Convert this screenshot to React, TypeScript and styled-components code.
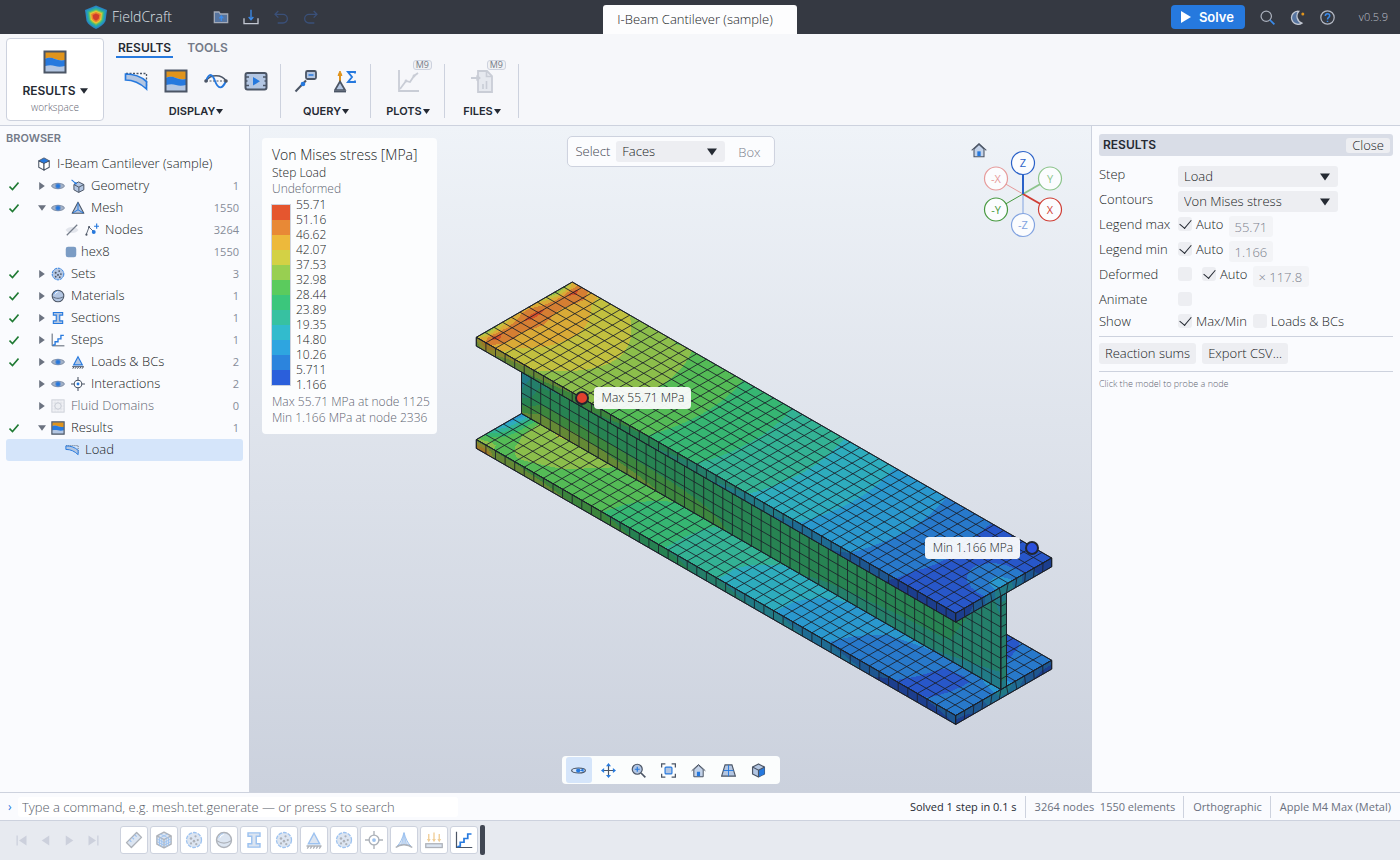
import React from "react";
import styled, { createGlobalStyle, css } from "styled-components";

const c = {
  ink: "#181c24",
  strong: "#252a33",
  muted: "#5f6572",
  faint: "#7b818d",
  line: "#cdd2de",
  panel: "#fafbfe",
  ribbon: "#f6f7fa",
  control: "#edeef2",
  accent: "#2679de",
  iconDark: "#4b5565",
  iconLight: "#b3c6e2",
  orange: "#e0941c",
};

const body = `"Open Sans", "Noto Sans", sans-serif`;
const caps = `Inter, "Liberation Sans", sans-serif`;

const Global = createGlobalStyle`
  * { box-sizing: border-box; }
  body { margin: 0; font: 300 13px/18px ${body}; color: ${c.ink}; background: ${c.panel}; }
  button, input, select { font: inherit; color: inherit; }
  button { border: 0; padding: 0; background: none; cursor: pointer; }
  svg { display: block; flex: none; }
`;

/* ---------- icons ---------- */

const D = c.iconDark;
const B = c.accent;
const L = c.iconLight;
const O = c.orange;

const icons: Record<string, React.ReactNode> = {
  contour: (
    <>
      <path d="M1.5 1.5h21v21h-21z" fill={L} />
      <path d="M2 2h20v8c-4 1-7 0-10-1s-7-2-10 0z" fill={O} />
      <path d="M2 9c4-2 7-1 10 0s6 2 10 1v6c-4 1-7 1-10 0s-6-1-10 0z" fill={B} />
      <path d="M1.5 1.5h21v21h-21z" fill="none" stroke={D} strokeWidth="2" />
    </>
  ),
  deformed: (
    <>
      <path d="M2 4.5h20.5v12" fill="none" stroke={D} strokeWidth="1.3" strokeDasharray="2 1.5" />
      <path d="M1.5 5c8 0 15 2 21 7.5V20C16 14 10 11 1.5 11z" fill={L} stroke={B} strokeWidth="1.7" />
    </>
  ),
  wave: (
    <>
      <path d="M2 12h20" stroke={D} strokeWidth="1" strokeDasharray="2 1.5" />
      <path d="M2 12c4-7 16-7 20 0" fill="none" stroke={D} strokeWidth="1.7" />
      <path d="M2 12c3-8 6-8 9 0s7 9 11 0" fill="none" stroke={B} strokeWidth="1.9" />
      <circle cx="2" cy="12" r="1.8" fill={D} />
      <circle cx="22" cy="12" r="1.8" fill={D} />
    </>
  ),
  animate: (
    <>
      <rect x="1.5" y="4" width="21" height="16.5" rx="2" fill={L} stroke={D} strokeWidth="2" />
      <path d="M2 8h3M2 12h1.5M2 16.5h3M19 8h3M20.5 12H22M19 16.5h3" stroke={D} strokeWidth="1.4" />
      <path d="M9 8l7 4.2-7 4.3z" fill={B} />
    </>
  ),
  probe: (
    <>
      <path d="M1.5 22.5L12 11.5" stroke={D} strokeWidth="2" />
      <circle cx="9" cy="15" r="2.3" fill={B} />
      <rect x="12" y="2" width="10" height="8" rx="1.5" fill={L} stroke={D} strokeWidth="1.8" />
      <path d="M14.5 6h5" stroke={B} strokeWidth="1.5" />
    </>
  ),
  sum: (
    <>
      <path d="M6 13V4" stroke={O} strokeWidth="2" />
      <path d="M4 6.5L6 2l2 4.5z" fill={O} stroke={O} />
      <path d="M6 12.5l5 8.5H1z" fill={L} stroke={D} strokeWidth="1.7" />
      <path d="M0 22.5h12" stroke={D} strokeWidth="1.8" />
      <path d="M21 4.5V3h-7l4 5-4 5h7v-1.5" fill="none" stroke={B} strokeWidth="1.9" />
    </>
  ),
  plots: (
    <>
      <path d="M3 1v21h20" fill="none" stroke="#c9cdd6" strokeWidth="1.8" />
      <path d="M4 20l6-8 4 1 4-6 4-3" fill="none" stroke="#c9cdd6" strokeWidth="1.8" />
      <circle cx="10" cy="12" r="1.4" fill="#c9cdd6" />
      <circle cx="18" cy="7" r="1.4" fill="#c9cdd6" />
    </>
  ),
  files: (
    <>
      <path d="M8 2h9l5 5v16H8z" fill="#e6e9ef" stroke="#c9cdd6" strokeWidth="1.8" />
      <path d="M16.5 2v5.5H22M13 20v-5M16.5 20v-8" fill="none" stroke="#c9cdd6" strokeWidth="1.6" />
      <path d="M1 9h8M6.5 6.5l3 2.5-3 2.5" fill="none" stroke="#c9cdd6" strokeWidth="1.8" />
    </>
  ),
  home: (
    <>
      <path d="M4.5 10.5V22h15V10.5L12 3.5z" fill="#c3d2e8" stroke={D} strokeWidth="1.6" />
      <path d="M1 12.5l11-10 11 10" fill="none" stroke={D} strokeWidth="1.6" />
      <path d="M9.5 14h5v7h-5z" fill={B} />
    </>
  ),
  root: (
    <>
      <path d="M3 6.5l9 4v12l-9-5z" fill="#fff" stroke={D} strokeWidth="1.8" strokeLinejoin="round" />
      <path d="M21 6.5l-9 4v12l9-5z" fill="#fff" stroke={D} strokeWidth="1.8" strokeLinejoin="round" />
      <path d="M12 1.5l9 5-9 4.5-9-4.5z" fill={B} stroke={D} strokeWidth="1.5" strokeLinejoin="round" />
    </>
  ),
  geometry: (
    <>
      <path d="M13 5l9 4.5v9L13 23l-8-4.5v-9z" fill={L} stroke={D} strokeWidth="1.7" strokeLinejoin="round" />
      <path d="M5 9.5l8.5 4.5L22 9.5M13.5 14v9" fill="none" stroke={D} strokeWidth="1.7" />
      <path d="M1 1.5l7 6" stroke={B} strokeWidth="1.8" />
      <circle cx="8" cy="7.5" r="2" fill={B} />
    </>
  ),
  mesh: (
    <>
      <path d="M12 2l10 19H2z" fill={L} stroke={D} strokeWidth="1.8" strokeLinejoin="round" />
      <path d="M12 3v12L3 20.5M12 15l9 5.5" fill="none" stroke={B} strokeWidth="1.7" />
    </>
  ),
  eye: (
    <>
      <path d="M1 12C5 6 19 6 23 12 19 18 5 18 1 12z" fill="#a3b2c8" stroke="#8796ad" strokeWidth="1.8" />
      <circle cx="12" cy="12" r="4.6" fill="#5c8bcc" />
      <circle cx="12" cy="12" r="3.2" fill={B} />
    </>
  ),
  eyeOff: (
    <>
      <path d="M1 12C5 5 19 5 23 12 19 19 5 19 1 12z" fill="#e2e5ec" />
      <path d="M3 21L21 3" stroke="#747c8a" strokeWidth="2" />
    </>
  ),
  nodes: (
    <>
      <path d="M2 20L7 7l8 8" fill="none" stroke={D} strokeWidth="1.5" />
      <circle cx="2.5" cy="20" r="1.8" fill={D} />
      <circle cx="7" cy="7" r="1.8" fill={D} />
      <circle cx="15" cy="15.5" r="3.3" fill={B} />
      <path d="M20 1v9M15.5 5.5h9" stroke={B} strokeWidth="2" />
    </>
  ),
  hex: <rect x="3" y="3" width="18" height="18" rx="4" fill="#7b9cc4" />,
  sets: (
    <>
      <circle cx="12" cy="12" r="10" fill={L} stroke={B} strokeWidth="1.7" strokeDasharray="5 1.5" />
      <g fill={D}>
        <circle cx="8" cy="10" r="1.7" />
        <circle cx="14" cy="7" r="1.5" />
        <circle cx="17" cy="12" r="1.5" />
        <circle cx="12" cy="13.5" r="1.7" />
        <circle cx="8" cy="16.5" r="1.5" />
        <circle cx="15" cy="17.5" r="1.5" />
      </g>
    </>
  ),
  material: (
    <>
      <circle cx="12" cy="12" r="10" fill={L} stroke={D} strokeWidth="1.8" />
      <path d="M2.5 13c6 4 13 4 19 0" fill="none" stroke={D} strokeWidth="1.4" />
      <path d="M6 9c1-2.5 3-4 5.5-4.5" fill="none" stroke="#fff" strokeWidth="2" />
      <path d="M5 9c1-3 3-5 6-5.5" fill="none" stroke={B} strokeWidth="1.2" />
    </>
  ),
  section: <path d="M4 2.5h16V7h-5v10h5v4.5H4V17h5V7H4z" fill={L} stroke={B} strokeWidth="1.9" />,
  steps: (
    <>
      <path d="M2 1v21h21" fill="none" stroke={D} strokeWidth="1.6" />
      <path d="M3 21l4-1v-5h5v-5h5V4h5" fill="none" stroke={B} strokeWidth="2.3" />
    </>
  ),
  loads: (
    <>
      <path d="M12 3l7.5 14h-15z" fill={L} stroke={B} strokeWidth="1.9" />
      <path d="M2 20h20M3 23.5l2-3M7 23.5l2-3M11 23.5l2-3M15 23.5l2-3M19 23.5l2-3" stroke={D} strokeWidth="1.7" fill="none" />
    </>
  ),
  interactions: (
    <>
      <circle cx="12" cy="12" r="6.5" fill="#fff" stroke={D} strokeWidth="1.8" />
      <path d="M12 0v6M12 18v6M0 12h6M18 12h6" stroke={D} strokeWidth="1.8" />
      <circle cx="12" cy="12" r="2.5" fill={B} />
    </>
  ),
  fluid: (
    <>
      <rect x="1.5" y="1.5" width="21" height="21" fill="#f0f1f5" stroke="#cdd1d9" strokeWidth="1.7" />
      <path d="M2 7h20M2 12h20M2 17h20M7 2v20M12 2v20M17 2v20" stroke="#d5d9e0" strokeWidth="1" strokeDasharray="2 1" />
      <circle cx="12" cy="12" r="5.5" fill="#eceef2" stroke="#c6cad3" strokeWidth="1.6" />
    </>
  ),
  orbit: (
    <>
      <ellipse cx="12" cy="12" rx="11" ry="4" fill="none" stroke={D} strokeWidth="1.9" />
      <circle cx="11.5" cy="12" r="3.4" fill={B} />
      <path d="M14 12l6-3.5.5 6z" fill={B} />
    </>
  ),
  pan: (
    <>
      <path d="M12 4v16M4 12h16" stroke={D} strokeWidth="1.9" />
      <path d="M12 0l4 5H8zM12 24l4-5H8zM0 12l5-4v8zM24 12l-5-4v8z" fill={B} />
    </>
  ),
  zoomIn: (
    <>
      <circle cx="10" cy="10" r="8" fill={L} stroke={D} strokeWidth="1.9" />
      <path d="M16 16l7 7" stroke={D} strokeWidth="2.6" />
      <path d="M10 6v8M6 10h8" stroke={B} strokeWidth="1.9" />
    </>
  ),
  fit: (
    <>
      <path d="M1 7V1.5h6M17 1.5h6V7M23 17v5.5h-6M7 22.5H1V17" fill="none" stroke={D} strokeWidth="2" />
      <rect x="6.5" y="6.5" width="11" height="11" rx="1.5" fill={L} stroke={B} strokeWidth="1.9" />
    </>
  ),
  persp: (
    <>
      <path d="M6.5 3h11L23 21H1z" fill={L} stroke={D} strokeWidth="1.8" />
      <path d="M12 3v18M4 12h16" stroke={B} strokeWidth="1.5" />
    </>
  ),
  cube: (
    <>
      <path d="M12 1.5l9.5 5v11l-9.5 5-9.5-5v-11z" fill={L} stroke={D} strokeWidth="1.9" strokeLinejoin="round" />
      <path d="M12 11.5l9.5-5v11l-9.5 5z" fill={B} />
      <path d="M2.5 6.5l9.5 5 9.5-5M12 11.5v11" fill="none" stroke={D} strokeWidth="1.8" />
    </>
  ),
  sketch: (
    <>
      <path d="M2 15.5L15.5 2 22 8.5 8.5 22z" fill={L} stroke={D} strokeWidth="1.8" strokeLinejoin="round" />
      <path d="M6 12l2.5 2.5M9.5 8.5L12 11M13 5l2.5 2.5" stroke={B} strokeWidth="1.5" />
    </>
  ),
  meshCube: (
    <>
      <path d="M12 1.5l9.5 5v11l-9.5 5-9.5-5v-11z" fill={L} stroke={D} strokeWidth="1.8" strokeLinejoin="round" />
      <path d="M2.5 6.5l9.5 5 9.5-5M12 11.5v11" fill="none" stroke={D} strokeWidth="1.6" />
      <path
        d="M6 8.5v11M9 10v11M15 10v11M18 8.5v11M2.5 10.5l9.5 5 9.5-5M2.5 14l9.5 5 9.5-5M7 4l10 5M17 4L7 9"
        fill="none"
        stroke={B}
        strokeWidth="1.2"
      />
    </>
  ),
  constraint: (
    <>
      <path d="M12 2C10 10 7 16 3 20c6-3 12-3 18 0-4-4-7-10-9-18z" fill={L} stroke={B} strokeWidth="1.3" />
      <path d="M12 3L9 18M12 3v15M12 3l3 15" stroke={B} strokeWidth="1" />
      <path d="M1 22c6-5 16-5 22 0" fill="none" stroke={D} strokeWidth="1.9" />
    </>
  ),
  pressure: (
    <>
      <rect x="1" y="17" width="22" height="5" fill={L} stroke={D} strokeWidth="1.7" />
      <path d="M5 4v9M12 2v11M19 4v9" stroke={O} strokeWidth="1.8" />
      <path d="M2.5 10.5h5L5 15zM9.5 10.5h5L12 15zM16.5 10.5h5L19 15z" fill={O} />
    </>
  ),
  open: (
    <>
      <path d="M2 4.5h7l2 3h11v13H2z" fill="#56749f" stroke="#a4abb8" strokeWidth="1.9" />
      <path d="M12.5 18v-6M9.5 14l3-3.5 3 3.5" fill="none" stroke="#3b8bea" strokeWidth="2" />
    </>
  ),
  save: (
    <>
      <path d="M1.5 14v8h21v-8" fill="none" stroke="#c3c8d2" strokeWidth="2" />
      <path d="M12 1v14M8.5 12l3.5 4 3.5-4" fill="none" stroke="#3b8bea" strokeWidth="2" />
    </>
  ),
  undo: <path d="M8 3L3 8l5 5M3 8h12a6 6 0 010 13H7" fill="none" stroke="#3a5079" strokeWidth="1.9" />,
  redo: <path d="M16 3l5 5-5 5M21 8H9a6 6 0 000 13h8" fill="none" stroke="#3a5079" strokeWidth="1.9" />,
  search: (
    <>
      <circle cx="10" cy="10" r="8.3" fill="none" stroke="#a9afbb" strokeWidth="2" />
      <path d="M16 16l7 7" stroke="#3b8bea" strokeWidth="2.8" />
    </>
  ),
  moon: (
    <>
      <path d="M14 2a10.5 10.5 0 105 19A12 12 0 0114 2z" fill="#56749f" stroke="#c3c8d2" strokeWidth="2" />
      <circle cx="20.5" cy="6.5" r="2.4" fill={O} />
    </>
  ),
  help: (
    <>
      <circle cx="12" cy="12" r="10.7" fill="none" stroke="#b5bac5" strokeWidth="1.9" />
      <path d="M8.5 9.5c0-5 7-4.5 7-.5 0 3-3.5 2.5-3.5 6M12 17v2.2" fill="none" stroke="#3b8bea" strokeWidth="2.4" />
    </>
  ),
  first: <path d="M4 4v16h2V4zM20 4v16L8 12z" fill="#ccd0dc" />,
  prev: <path d="M18 4v16L6 12z" fill="#ccd0dc" />,
  next: <path d="M6 4v16l12-8z" fill="#ccd0dc" />,
  last: <path d="M4 4v16l12-8zM18 4v16h2V4z" fill="#ccd0dc" />,
};

const Icon = ({ name, size = 14 }: { name: string; size?: number }) => (
  <svg width={size} height={size} viewBox="0 0 24 24" aria-hidden="true">
    {icons[name]}
  </svg>
);

const Caret = ({ size = 8, color = c.strong }: { size?: number; color?: string }) => (
  <svg width={size} height={size} viewBox="0 0 10 10" aria-hidden="true">
    <path d="M0 1.5h10l-5 7z" fill={color} />
  </svg>
);

/* ---------- stress model ---------- */

const LEGEND = [
  "#2b5fdb", "#2c84dd", "#2ea5e0", "#32bbcd", "#37c1a1", "#3bc67c",
  "#5bcb5d", "#98cf51", "#d3d145", "#edb93b", "#e88936", "#e5562f",
];

type P = [number, number];
type Field = (u: number, v: number) => number;

const NU = 50;
const NV = 11;
const NW = 9;
const THICK = 8.8;
const HEIGHT = 111.1;

// Isometric projection of (element along length, pixels across width, pixels down).
const project = (u: number, y: number, z: number): P => [
  476.3 + 9.588 * u + y,
  337.3 + 5.52 * u - 0.5764 * y + z,
];

const innerY = (v: number) => (v <= 5 ? v * 9.04 : v >= 6 ? 96 - (11 - v) * 9.04 : 45.2 + (v - 5) * 5.6);
const outerY = (v: number) => (v * 96) / NV;

// Bilinear lookup; rows[v][u].
const table = (us: number[], vs: number[], rows: number[][]): Field => (u, v) => {
  const find = (a: number[], t: number) => {
    let i = 0;
    while (i < a.length - 2 && t > a[i + 1]) i++;
    return [i, Math.max(0, Math.min(1, (t - a[i]) / (a[i + 1] - a[i])))];
  };
  const [i, s] = find(us, u);
  const [j, t] = find(vs, v);
  const row = (k: number) => rows[k][i] * (1 - s) + rows[k][i + 1] * s;
  return row(j) * (1 - t) + row(j + 1) * t;
};

const spineLevels = [10, 9, 8, 7, 6, 5, 4, 3, 2, 1, 0.4];
const spine = table([2, 5, 9.3, 14, 18.7, 23.8, 29.3, 34.5, 40, 44.4, 50], [0, 1], [spineLevels, spineLevels]);
const root0 = [8.5, 7.3, 7.5, 8.2, 8.8, 9.7, 9.7, 8.8, 8, 7, 7.3, 9];
const root1 = [10.3, 11.6, 10.9, 10.7, 10.9, 11.3, 11.3, 10.9, 10.6, 10.8, 11.4, 10.8];
const root2 = [9.3, 10, 10.1, 9.9, 10.1, 10.2, 10.1, 9.9, 9.9, 10.1, 10.3, 9.6];

const topField: Field = (u, v) => {
  const k = Math.round(Math.max(0, Math.min(11, v)));
  if (u < 0.5) return root0[k];
  if (u < 1.5) return root1[k];
  if (u < 2.5) return root2[k];
  const bend = u < 12 ? 0.11 : u < 17 ? 0.05 : 0.03;
  const tip = 2.1 * Math.exp(-(((50 - u) / 2.2) ** 2) - ((v - 5.6) / 2) ** 2);
  return spine(u + bend * (v - 5.5) ** 2, 0) + tip;
};

const bu = [0, 1, 2, 4, 7, 10, 13.2, 16, 19.7, 25.2, 30, 34, 37, 40, 43.3, 45, 47, 50];
const b0 = [7.3, 7.6, 6.9, 6.9, 6.7, 6.4, 6, 5.5, 5, 4, 3.2, 2.5, 1.95, 1.5, 1, 0.9, 1.02, 1.3];
const b2 = [3, 5.2, 6.9, 7.4, 7.1, 6.7, 6.1, 5.6, 5, 4, 3.2, 2.6, 2.1, 1.7, 1.2, 0.95, 0.9, 1.35];
const b4 = [2.3, 5, 7.2, 7.4, 7.2, 6.9, 6.3, 5.8, 5.05, 4.2, 3.4, 2.75, 2.3, 1.9, 1.3, 1.02, 0.85, 1.5];
const b5 = [2, 5, 7.3, 8.2, 7.6, 6.9, 6.5, 6, 5.1, 4.35, 3.6, 3.05, 2.8, 2.4, 2.02, 1.8, 1.5, 3];
const bottomField = table(bu, [0, 2.5, 4, 5, 6, 7, 8.5, 11], [b0, b2, b4, b5, b5, b4, b2, b0]);

const webField = table(
  [0, 2, 6, 12, 20, 28, 36, 44, 50],
  [0, 4, 7, 9],
  [
    [6, 6, 6, 6, 6, 5.8, 5.8, 6.4, 3.6],
    [2.6, 4.2, 4.6, 4.8, 5.1, 5.3, 5.4, 5.4, 4.4],
    [4.2, 5.9, 6.1, 5.9, 5.8, 5.5, 5.4, 5.1, 4.2],
    [7.2, 8.1, 8.1, 7.4, 6.2, 5.1, 4.4, 3.8, 3],
  ]
);

const topSide: Field = (u, w) => Math.max(0.3, topField(u, 0) * (1 - 0.17 * w));
const bottomSide: Field = (u, w) => bottomField(u, 0) + (u < 2 ? 2.9 : 0.6) * w - (u > 40 ? 0.9 * w : 0);
const topEnd: Field = (v, w) => 0.6 + 2.9 * Math.exp(-(((v - 5.5) / 2.4) ** 2)) + 0.2 * w;
const bottomEnd: Field = (v, w) => 1.25 + 2.3 * Math.exp(-(((v - 5.5) / 2.4) ** 2)) - 0.6 * w;
const webEnd = table([0, 1], [0, 1, 8, 9], [[3.4, 3.4], [4.3, 4.3], [4.3, 4.3], [3.2, 3.2]]);

const shade = (hex: string, k: number) =>
  `rgb(${[1, 3, 5].map((i) => Math.round(parseInt(hex.slice(i, i + 2), 16) * k)).join(",")})`;

type Vert = { p: P; f: number };

// Keeps the part of a polygon where the field is above (or below) a level.
const clip = (poly: Vert[], level: number, above: boolean): Vert[] => {
  const out: Vert[] = [];
  const inside = (f: number) => (above ? f >= level : f <= level);
  poly.forEach((a, i) => {
    const b = poly[(i + 1) % poly.length];
    if (inside(a.f)) out.push(a);
    if (inside(a.f) !== inside(b.f)) {
      const t = (level - a.f) / (b.f - a.f);
      out.push({ p: [a.p[0] + t * (b.p[0] - a.p[0]), a.p[1] + t * (b.p[1] - a.p[1])], f: level });
    }
  });
  return out;
};

const toPath = (pts: P[], close = true) =>
  "M" + pts.map((p) => p[0].toFixed(1) + " " + p[1].toFixed(1)).join("L") + (close ? "Z" : "");

interface SurfaceProps {
  nu: number;
  nv: number;
  at: (i: number, j: number) => P;
  field: Field;
  light: number;
}

const Surface = ({ nu, nv, at, field, light }: SurfaceProps) => {
  const bands: string[] = LEGEND.map(() => "");
  for (let i = 0; i < nu; i++) {
    for (let j = 0; j < nv; j++) {
      const q = [[i, j], [i + 1, j], [i + 1, j + 1], [i, j + 1]].map(([a, b]) => ({
        p: at(a, b),
        f: Math.max(0.01, Math.min(11.99, field(a, b))),
      }));
      // Fan each quad around its centre so the bands stay smooth.
      const mid: Vert = {
        p: [q.reduce((s, k) => s + k.p[0], 0) / 4, q.reduce((s, k) => s + k.p[1], 0) / 4],
        f: q.reduce((s, k) => s + k.f, 0) / 4,
      };
      q.forEach((a, k) => {
        const tri = [a, q[(k + 1) % 4], mid];
        const fs = tri.map((t) => t.f);
        const hi = Math.floor(Math.max(...fs));
        for (let b = Math.floor(Math.min(...fs)); b <= hi; b++) {
          const part = clip(clip(tri, b, true), b + 1, false);
          if (part.length > 2) bands[b] += toPath(part.map((t) => t.p));
        }
      });
    }
  }
  const range = (n: number) => Array.from({ length: n + 1 }, (_, k) => k);
  const grid =
    range(nu).map((i) => toPath([at(i, 0), at(i, nv)], false)).join("") +
    range(nv).map((j) => toPath([at(0, j), at(nu, j)], false)).join("");
  return (
    <g>
      {bands.map((d, b) => d && <path key={b} d={d} fill={shade(LEGEND[b], light)} shapeRendering="crispEdges" />)}
      <path d={grid} fill="none" stroke="#1b2029" strokeWidth="1" strokeOpacity=".85" />
      <path
        d={toPath([at(0, 0), at(nu, 0), at(nu, nv), at(0, nv)])}
        fill="none"
        stroke="#1b2029"
        strokeLinejoin="round"
      />
    </g>
  );
};

const LOW = HEIGHT - THICK;

const Beam = () => (
  <g>
    <Surface nu={NU} nv={NV} field={bottomField} light={0.92} at={(i, j) => project(i, innerY(j), LOW)} />
    <Surface nu={NU} nv={1} field={bottomSide} light={0.65} at={(i, j) => project(i, 0, LOW + j * THICK)} />
    <Surface nu={NV} nv={1} field={bottomEnd} light={0.65}
      at={(i, j) => project(NU, j ? outerY(i) : innerY(i), LOW + j * THICK)} />
    <Surface nu={NU} nv={NW} field={webField} light={0.66}
      at={(i, j) => project(i, innerY(5), THICK + (j * (LOW - THICK)) / NW)} />
    <Surface nu={1} nv={NW} field={webEnd} light={0.65}
      at={(i, j) => project(NU, innerY(5 + i), THICK + (j * (LOW - THICK)) / NW)} />
    <Surface nu={NU} nv={NV} field={topField} light={0.92} at={(i, j) => project(i, outerY(j), 0)} />
    <Surface nu={NU} nv={1} field={topSide} light={0.65} at={(i, j) => project(i, 0, j * THICK)} />
    <Surface nu={NV} nv={1} field={topEnd} light={0.65}
      at={(i, j) => project(NU, j ? innerY(i) : outerY(i), j * THICK)} />
  </g>
);

const CanvasSvg = styled.svg`
  position: absolute;
  inset: 0;
  width: 100%;
  height: 100%;
  font: 300 12px ${body};
`;

const Model = () => (
  <CanvasSvg viewBox="250 126 841 666" role="img" aria-label="I-beam stress contours">
    <Beam />
    <circle cx="582" cy="398" r="6" fill="#e2402e" stroke="#22262f" strokeWidth="2" />
    <circle cx="1032" cy="548" r="6" fill="#2b50dc" stroke="#22262f" strokeWidth="2" />
    <rect x="594" y="387" width="97" height="22" rx="4" fill="#fbfcfd" fillOpacity=".95" />
    <rect x="925" y="537" width="95" height="22" rx="4" fill="#fbfcfd" fillOpacity=".95" />
    <g fill={c.ink} textAnchor="middle">
      <text x="643" y="402">Max 55.71 MPa</text>
      <text x="973" y="552">Min 1.166 MPa</text>
    </g>
  </CanvasSvg>
);

/* ---------- shell ---------- */

const Page = styled.div`
  display: flex;
  flex-direction: column;
  min-height: 100vh;
`;

const TitleBar = styled.header`
  display: grid;
  grid-template-columns: 1fr auto 1fr;
  align-items: center;
  height: 34px;
  background: #353942;
  color: #dfe2e8;
`;

const TitleGroup = styled.div<{ $end?: boolean }>`
  display: flex;
  align-items: center;
  justify-content: ${(p) => (p.$end ? "flex-end" : "flex-start")};
  padding: ${(p) => (p.$end ? "0 12px 0 0" : "0 0 0 84px")};
`;

const Brand = styled.span`
  margin: 0 34px 0 4px;
  font-size: 14px;
`;

const TitleButton = styled.button`
  display: grid;
  place-items: center;
  width: 30px;
  height: 30px;
`;

const DocTab = styled.div`
  align-self: end;
  height: 29px;
  padding: 5px 24px 0 14px;
  border-radius: 3px 3px 0 0;
  background: #fdfdfe;
  color: ${c.ink};
`;

const Solve = styled.button`
  display: flex;
  align-items: center;
  gap: 8px;
  height: 24px;
  margin-right: 8px;
  padding: 0 11px 0 10px;
  border-radius: 4px;
  background: ${c.accent};
  color: #fff;
  font: 600 13px/20px ${caps};
`;

const Version = styled.span`
  margin-left: 16px;
  font-size: 11px;
  color: #b9bdc7;
`;

const Ribbon = styled.section`
  display: flex;
  height: 92px;
  padding: 4px 6px;
  gap: 12px;
  background: ${c.ribbon};
  border-bottom: 1px solid ${c.line};
`;

const Workspace = styled.button`
  display: flex;
  flex-direction: column;
  align-items: center;
  width: 98px;
  height: 83px;
  padding-top: 11px;
  border: 1px solid ${c.line};
  border-radius: 4px;
  background: #fff;
`;

const CapsLabel = styled.span<{ $size?: number }>`
  display: inline-flex;
  align-items: center;
  gap: 1px;
  font: 600 ${(p) => p.$size ?? 11}px/14px ${caps};
  color: ${c.strong};
`;

const WorkspaceName = styled(CapsLabel)`
  gap: 4px;
  margin: 10px 0 3px;
`;

const Small = styled.small<{ $size?: number }>`
  display: block;
  font-size: ${(p) => p.$size ?? 10}px;
  line-height: 12px;
  color: ${c.muted};
`;

const RibbonMain = styled.div`
  display: flex;
  flex-direction: column;
`;

const RibbonTabs = styled.nav`
  display: flex;
  gap: 12px;
  height: 26px;
`;

const RibbonTab = styled.button<{ $active?: boolean }>`
  height: 20px;
  padding: 2px 2px 0;
  border-bottom: 2px solid ${(p) => (p.$active ? c.accent : "transparent")};
  color: ${(p) => (p.$active ? c.strong : "#747a88")};
  font: 600 12px/16px ${caps};
`;

const Groups = styled.div`
  display: flex;
  height: 54px;
`;

const Group = styled.div`
  display: flex;
  flex-direction: column;
  align-items: center;
  justify-content: space-between;
  min-width: 74px;
  padding: 0 4px 0 5px;
  border-right: 1px solid ${c.line};
  &:first-child { padding-left: 0; }
`;

const Tools = styled.div`
  display: flex;
`;

const Tool = styled.button`
  position: relative;
  display: grid;
  place-items: center;
  width: 40px;
  height: 34px;
`;

const Badge = styled.span`
  position: absolute;
  top: -4px;
  right: -4px;
  padding: 0 2px;
  border: 1px solid ${c.line};
  border-radius: 3px;
  background: #f0f1f4;
  color: #757b88;
  font: 400 9px/8px ${body};
`;

const GroupLabel = styled.button`
  display: flex;
`;

const Main = styled.main`
  display: flex;
  flex: 1;
`;

const Browser = styled.aside`
  flex: none;
  width: 250px;
  padding: 4px 6px;
  border-right: 1px solid ${c.line};
`;

const PanelTitle = styled.h2`
  margin: 0 0 7px;
  font: 600 11px/16px ${caps};
  color: #747a88;
`;

const Tree = styled.ul`
  margin: 0;
  padding: 0;
  list-style: none;
`;

const TreeRow = styled.li<{ $selected?: boolean; $dim?: boolean }>`
  display: flex;
  align-items: center;
  height: 22px;
  padding-right: 4px;
  border-radius: 3px;
  background: ${(p) => (p.$selected ? "#d5e5fa" : "transparent")};
  color: ${(p) => (p.$dim ? c.muted : c.ink)};
`;

const Status = styled.span`
  display: grid;
  place-items: center;
  width: 16px;
`;

const TreeItem = styled.span<{ $deep?: boolean }>`
  display: flex;
  align-items: center;
  flex: 1;
  gap: 4px;
  padding-left: ${(p) => (p.$deep ? 42 : 14)}px;
`;

const TreeLabel = styled.span`
  padding: 0 0 2px 1px;
`;

const Twisty = styled.span<{ $open?: boolean }>`
  display: grid;
  place-items: center;
  width: 12px;
  height: 12px;
  margin-right: -2px;
  transform: rotate(${(p) => (p.$open ? 0 : -90)}deg);
`;

const IconSlot = styled.span<{ $narrow?: boolean }>`
  display: grid;
  place-items: center;
  width: ${(p) => (p.$narrow ? 12 : 16)}px;
`;

const Count = styled.span`
  font-size: 11px;
  font-weight: 400;
  color: #868c99;
`;

const Viewport = styled.section`
  position: relative;
  flex: 1;
  min-width: 0;
  min-height: 666px;
  background: linear-gradient(#eff3f8, #cbd1dd);
`;

const LegendCard = styled.div`
  position: absolute;
  top: 12px;
  left: 12px;
  padding: 7px 7px 8px 10px;
  border-radius: 4px;
  background: #fcfdfe;
  font-size: 12px;
`;

const LegendTitle = styled.div`
  font-size: 14px;
  line-height: 20px;
`;

const LegendLine = styled.div<{ $muted?: boolean }>`
  line-height: 16px;
  color: ${(p) => (p.$muted ? c.muted : c.ink)};
`;

const Scale = styled.div`
  display: flex;
  align-items: center;
  gap: 6px;
  margin-bottom: 2px;
`;

const Swatches = styled.div`
  width: 18px;
  outline: 1px solid ${c.line};
`;

const Swatch = styled.div<{ $color: string }>`
  height: 15px;
  background: ${(p) => p.$color};
`;

const Tick = styled.div`
  line-height: 15px;
`;

const SelectBar = styled.div`
  position: absolute;
  top: 10px;
  left: 50%;
  transform: translateX(-50%);
  display: flex;
  align-items: center;
  height: 31px;
  padding: 0 13px 0 8px;
  border: 1px solid ${c.line};
  border-radius: 5px;
  background: #fbfcfe;
  color: #3f4551;
`;

const SelectWrap = styled.span<{ $width: number }>`
  display: grid;
  align-items: center;
  width: ${(p) => p.$width}px;
  > * { grid-area: 1 / 1; }
  > svg { justify-self: end; margin-right: 8px; pointer-events: none; }
`;

const Select = styled.select`
  appearance: none;
  width: 100%;
  height: 21px;
  padding: 0 6px;
  border: 0;
  border-radius: 3px;
  background: ${c.control};
  color: ${c.ink};
  line-height: 21px;
`;

const Dropdown = ({ id, value, width }: { id: string; value: string; width: number }) => (
  <SelectWrap $width={width}>
    <Select id={id} defaultValue={value}>
      <option>{value}</option>
    </Select>
    <Caret size={10} />
  </SelectWrap>
);

const SelectLabel = styled.label`
  margin-right: 6px;
  padding-bottom: 2px;
`;

const BoxButton = styled.button`
  margin-left: 13px;
  color: ${c.faint};
`;

const ViewCube = styled.svg`
  position: absolute;
  top: 20px;
  right: 24px;
  font: 400 11px ${body};
`;

const HomeButton = styled.button`
  position: absolute;
  top: 16px;
  right: 104px;
`;

const ViewBar = styled.div`
  position: absolute;
  bottom: 8px;
  left: 50%;
  transform: translateX(-50%);
  display: flex;
  gap: 4px;
  padding: 1px 8px 1px 4px;
  border-radius: 4px;
  background: #fbfdfd;
`;

const ViewButton = styled.button<{ $active?: boolean }>`
  display: grid;
  place-items: center;
  width: 26px;
  height: 26px;
  border-radius: 3px;
  background: ${(p) => (p.$active ? "#d5e5fa" : "transparent")};
`;

const Props = styled.aside`
  flex: none;
  width: 309px;
  padding: 8px 7px;
  border-left: 1px solid ${c.line};
`;

const PropsHead = styled.div`
  display: flex;
  align-items: center;
  justify-content: space-between;
  height: 22px;
  margin-bottom: 10px;
  padding: 0 3px 0 4px;
  border-radius: 3px;
  background: #d9dde7;
`;

const Button = styled.button<{ $compact?: boolean }>`
  height: ${(p) => (p.$compact ? 15 : 21)}px;
  padding: 0 6px;
  border-radius: 3px;
  background: ${c.control};
  line-height: ${(p) => (p.$compact ? 15 : 21)}px;
`;

const Form = styled.form`
  display: grid;
  gap: 4px;
  line-height: 16px;
`;

const FormRow = styled.div`
  display: grid;
  grid-template-columns: 75px 1fr;
  gap: 4px;
  min-height: 18px;
`;

const Controls = styled.div`
  display: flex;
  align-items: flex-start;
  gap: 6px;
`;

const Check = styled.input`
  appearance: none;
  display: grid;
  justify-content: center;
  width: 14px;
  height: 14px;
  margin: 1px 4px 0 0;
  border-radius: 3px;
  background: ${c.control};
  &:checked::before {
    content: "";
    width: 6px;
    height: 10px;
    border: solid ${c.strong};
    border-width: 0 1px 1px 0;
    transform: rotate(40deg);
  }
`;

const CheckLabel = styled.label`
  display: flex;
`;

const Value = styled.input<{ $wide?: boolean }>`
  width: ${(p) => (p.$wide ? 56 : 44)}px;
  height: 21px;
  padding: 0 5px;
  border: 0;
  border-radius: 3px;
  background: #f3f4f7;
  color: ${c.faint};
`;

const Rule = styled.hr`
  margin: 5px 0 6px;
  border: 0;
  border-top: 1px solid ${c.line};
`;

const ButtonRow = styled.div`
  display: flex;
  gap: 6px;
  padding-bottom: 2px;
`;

const StatusBar = styled.footer`
  display: flex;
  align-items: center;
  height: 28px;
  padding: 0 8px;
  border-top: 1px solid ${c.line};
  background: ${c.panel};
`;

const Prompt = styled.label`
  width: 10px;
  color: ${c.accent};
  font-size: 12px;
  font-weight: 400;
`;

const Command = styled.input`
  width: 440px;
  height: 20px;
  padding: 0 4px;
  border: 0;
  border-radius: 3px;
  background: #fff;
  &::placeholder { color: #565c67; }
`;

const Spacer = styled.span`
  flex: 1;
`;

const StatusText = styled.span<{ $strong?: boolean }>`
  padding: 0 8px 0 9px;
  border-left: ${(p) => (p.$strong ? "0" : `1px solid ${c.line}`)};
  color: ${(p) => (p.$strong ? c.strong : "#6b7180")};
  font-size: 11px;
  font-weight: 400;
  line-height: 22px;
  white-space: pre;
  &:last-child { padding-right: 1px; }
`;

const Timeline = styled.nav`
  display: flex;
  align-items: center;
  gap: 2px;
  height: 40px;
  padding: 0 9px 1px;
  border-top: 1px solid ${c.line};
  background: #e7eaf0;
`;

const Transport = styled.div`
  display: flex;
  width: 109px;
`;

const TransportButton = styled.button`
  display: grid;
  place-items: center;
  width: 24px;
  height: 24px;
`;

const Step = styled.button<{ $current?: boolean }>`
  display: grid;
  place-items: center;
  width: 28px;
  height: 28px;
  border: 1px solid ${c.line};
  border-radius: 3px;
  background: #fff;
  ${(p) =>
    !p.$current &&
    css`
      svg { opacity: 0.45; }
    `}
`;

const Playhead = styled.span`
  width: 5px;
  height: 30px;
  border-radius: 2px;
  background: #414753;
`;

/* ---------- data ---------- */

interface Node {
  label: string;
  icon: string;
  count?: number;
  done?: boolean;
  open?: boolean;
  leaf?: boolean;
  eye?: "eye" | "eyeOff";
  deep?: boolean;
  dim?: boolean;
  selected?: boolean;
}

const tree: Node[] = [
  { label: "I-Beam Cantilever (sample)", icon: "root", leaf: true },
  { label: "Geometry", icon: "geometry", count: 1, done: true, eye: "eye" },
  { label: "Mesh", icon: "mesh", count: 1550, done: true, eye: "eye", open: true },
  { label: "Nodes", icon: "nodes", count: 3264, eye: "eyeOff", deep: true, leaf: true },
  { label: "hex8", icon: "hex", count: 1550, deep: true, leaf: true },
  { label: "Sets", icon: "sets", count: 3, done: true },
  { label: "Materials", icon: "material", count: 1, done: true },
  { label: "Sections", icon: "section", count: 1, done: true },
  { label: "Steps", icon: "steps", count: 1, done: true },
  { label: "Loads & BCs", icon: "loads", count: 2, done: true, eye: "eye" },
  { label: "Interactions", icon: "interactions", count: 2, eye: "eye" },
  { label: "Fluid Domains", icon: "fluid", count: 0, dim: true },
  { label: "Results", icon: "contour", count: 1, done: true, open: true },
  { label: "Load", icon: "deformed", deep: true, leaf: true, selected: true },
];

const groups = [
  { label: "DISPLAY", tools: ["deformed", "contour", "wave", "animate"] },
  { label: "QUERY", tools: ["probe", "sum"] },
  { label: "PLOTS", tools: ["plots"], badge: "M9" },
  { label: "FILES", tools: ["files"], badge: "M9" },
];

const ticks = ["55.71", "51.16", "46.62", "42.07", "37.53", "32.98", "28.44", "23.89", "19.35", "14.80", "10.26", "5.711", "1.166"];

const history = ["sketch", "meshCube", "sets", "material", "section", "sets", "loads", "sets", "interactions", "constraint", "pressure", "steps"];

const axes = [
  { t: "Y", x: 27, y: -15.5, color: "#8cc48b", w: 2 },
  { t: "-X", x: -27, y: -15.5, color: "#e69a9a", w: 1 },
  { t: "-Z", x: 0, y: 31, color: "#82a3e0", w: 1 },
  { t: "-Y", x: -27, y: 15.5, color: "#47993f", w: 1 },
  { t: "X", x: 27, y: 15.5, color: "#cf3d34", w: 2 },
  { t: "Z", x: 0, y: -31, color: "#2a61c8", w: 2 },
];

const shieldRings = [
  { k: 1, fill: "#2a86c4" },
  { k: 0.88, fill: "#23a3b5" },
  { k: 0.76, fill: "#3db58a" },
  { k: 0.64, fill: "#8cc84e" },
  { k: 0.54, fill: "#e9c338" },
  { k: 0.44, fill: "#e8832d" },
  { k: 0.3, fill: "#d13c2a" },
];

const Logo = () => (
  <svg width="24" height="24" viewBox="0 0 24 24" aria-hidden="true">
    {shieldRings.map((r) => (
      <path
        key={r.k}
        d="M0 -11.5L11 -7L9.5 4C8 7.5 4 10 0 12C-4 10 -8 7.5 -9.5 4L-11 -7Z"
        transform={`translate(12 12) scale(${r.k})`}
        fill={r.fill}
      />
    ))}
  </svg>
);

const CheckMark = () => (
  <svg width="10" height="10" viewBox="0 0 10 10" aria-label="complete">
    <path d="M.5 5.5l3 3 6-7" fill="none" stroke="#1f7a33" strokeWidth="1.6" />
  </svg>
);

const Auto = ({ on = true, text = "Auto" }: { on?: boolean; text?: string }) => (
  <CheckLabel>
    <Check type="checkbox" defaultChecked={on} />
    {text}
  </CheckLabel>
);

export default function App() {
  return (
    <Page>
      <Global />
      <TitleBar>
        <TitleGroup>
          <Logo />
          <Brand>FieldCraft</Brand>
          {["open", "save", "undo", "redo"].map((n) => (
            <TitleButton key={n} aria-label={n}>
              <Icon name={n} size={16} />
            </TitleButton>
          ))}
        </TitleGroup>
        <DocTab>I-Beam Cantilever (sample)</DocTab>
        <TitleGroup $end>
          <Solve>
            <svg width="10" height="12" viewBox="0 0 10 12" aria-hidden="true">
              <path d="M0 0v12l10-6z" fill="#fff" />
            </svg>
            Solve
          </Solve>
          {["search", "moon", "help"].map((n) => (
            <TitleButton key={n} aria-label={n}>
              <Icon name={n} size={15} />
            </TitleButton>
          ))}
          <Version>v0.5.9</Version>
        </TitleGroup>
      </TitleBar>

      <Ribbon>
        <Workspace>
          <Icon name="contour" size={24} />
          <WorkspaceName $size={12}>
            RESULTS <Caret />
          </WorkspaceName>
          <Small>workspace</Small>
        </Workspace>
        <RibbonMain>
          <RibbonTabs>
            <RibbonTab $active>RESULTS</RibbonTab>
            <RibbonTab>TOOLS</RibbonTab>
          </RibbonTabs>
          <Groups>
            {groups.map((g) => (
              <Group key={g.label}>
                <Tools>
                  {g.tools.map((t) => (
                    <Tool key={t} aria-label={t}>
                      <Icon name={t} size={24} />
                      {g.badge && <Badge>{g.badge}</Badge>}
                    </Tool>
                  ))}
                </Tools>
                <GroupLabel>
                  <CapsLabel>
                    {g.label}
                    <Caret size={7} />
                  </CapsLabel>
                </GroupLabel>
              </Group>
            ))}
          </Groups>
        </RibbonMain>
      </Ribbon>

      <Main>
        <Browser>
          <PanelTitle>BROWSER</PanelTitle>
          <Tree>
            {tree.map((n) => (
              <TreeRow key={n.label} $selected={n.selected} $dim={n.dim}>
                <Status>{n.done && <CheckMark />}</Status>
                <TreeItem $deep={n.deep}>
                  {!n.leaf && (
                    <Twisty $open={n.open}>
                      <Caret size={8} color="#6b7280" />
                    </Twisty>
                  )}
                  {n.eye && (
                    <IconSlot>
                      <Icon name={n.eye} />
                    </IconSlot>
                  )}
                  <IconSlot $narrow={n.icon === "hex"}>
                    <Icon name={n.icon} />
                  </IconSlot>
                  <TreeLabel>{n.label}</TreeLabel>
                </TreeItem>
                {n.count !== undefined && <Count>{n.count}</Count>}
              </TreeRow>
            ))}
          </Tree>
        </Browser>

        <Viewport>
          <Model />
          <LegendCard>
            <LegendTitle>Von Mises stress [MPa]</LegendTitle>
            <LegendLine>Step Load</LegendLine>
            <LegendLine $muted>Undeformed</LegendLine>
            <Scale>
              <Swatches>
                {[...LEGEND].reverse().map((k) => (
                  <Swatch key={k} $color={k} />
                ))}
              </Swatches>
              <div>
                {ticks.map((t) => (
                  <Tick key={t}>{t}</Tick>
                ))}
              </div>
            </Scale>
            <LegendLine $muted>Max 55.71 MPa at node 1125</LegendLine>
            <LegendLine $muted>Min 1.166 MPa at node 2336</LegendLine>
          </LegendCard>

          <SelectBar>
            <SelectLabel htmlFor="pick">Select</SelectLabel>
            <Dropdown id="pick" value="Faces" width={109} />
            <BoxButton>Box</BoxButton>
          </SelectBar>

          <HomeButton aria-label="Home view">
            <Icon name="home" size={16} />
          </HomeButton>
          <ViewCube width="88" height="96" viewBox="-44 -48 88 96" role="img" aria-label="View orientation">
            {axes.map((a) => (
              <g key={a.t}>
                <path d={`M0 0L${a.x} ${a.y}`} stroke={a.color} strokeWidth={a.w} />
                <circle cx={a.x} cy={a.y} r="11.5" fill="#fbfcfe" stroke={a.color} strokeWidth="1.2" />
                <text x={a.x} y={a.y + 4} fill={a.color} textAnchor="middle">
                  {a.t}
                </text>
              </g>
            ))}
          </ViewCube>

          <ViewBar>
            {["orbit", "pan", "zoomIn", "fit", "home", "persp", "cube"].map((n, i) => (
              <ViewButton key={n} $active={i === 0} aria-label={n}>
                <Icon name={n} size={15} />
              </ViewButton>
            ))}
          </ViewBar>
        </Viewport>

        <Props>
          <PropsHead>
            <CapsLabel $size={12}>RESULTS</CapsLabel>
            <Button $compact>Close</Button>
          </PropsHead>
          <Form>
            <FormRow>
              <label htmlFor="step">Step</label>
              <Dropdown id="step" value="Load" width={160} />
            </FormRow>
            <FormRow>
              <label htmlFor="contours">Contours</label>
              <Dropdown id="contours" value="Von Mises stress" width={160} />
            </FormRow>
            <FormRow>
              <label htmlFor="lmax">Legend max</label>
              <Controls>
                <Auto />
                <Value id="lmax" defaultValue="55.71" />
              </Controls>
            </FormRow>
            <FormRow>
              <label htmlFor="lmin">Legend min</label>
              <Controls>
                <Auto />
                <Value id="lmin" defaultValue="1.166" />
              </Controls>
            </FormRow>
            <FormRow>
              <label htmlFor="deformed">Deformed</label>
              <Controls>
                <Check id="deformed" type="checkbox" />
                <Auto />
                <Value $wide aria-label="Deformation scale" defaultValue="× 117.8" />
              </Controls>
            </FormRow>
            <FormRow>
              <label htmlFor="animate">Animate</label>
              <Controls>
                <Check id="animate" type="checkbox" />
              </Controls>
            </FormRow>
            <FormRow>
              <span>Show</span>
              <Controls>
                <Auto text="Max/Min" />
                <Auto on={false} text="Loads & BCs" />
              </Controls>
            </FormRow>
          </Form>
          <Rule />
          <ButtonRow>
            <Button>Reaction sums</Button>
            <Button>Export CSV…</Button>
          </ButtonRow>
          <Rule />
          <Small $size={9}>Click the model to probe a node</Small>
        </Props>
      </Main>

      <StatusBar>
        <Prompt htmlFor="command">›</Prompt>
        <Command id="command" placeholder="Type a command, e.g. mesh.tet.generate — or press S to search" />
        <Spacer />
        <StatusText $strong>Solved 1 step in 0.1 s</StatusText>
        <StatusText>{"3264 nodes  1550 elements"}</StatusText>
        <StatusText>Orthographic</StatusText>
        <StatusText>Apple M4 Max (Metal)</StatusText>
      </StatusBar>

      <Timeline>
        <Transport>
          {["first", "prev", "next", "last"].map((n) => (
            <TransportButton key={n} aria-label={n}>
              <Icon name={n} size={15} />
            </TransportButton>
          ))}
        </Transport>
        {history.map((n, i) => (
          <Step key={i} $current={i === history.length - 1} aria-label={n}>
            <Icon name={n} size={18} />
          </Step>
        ))}
        <Playhead />
      </Timeline>
    </Page>
  );
}
